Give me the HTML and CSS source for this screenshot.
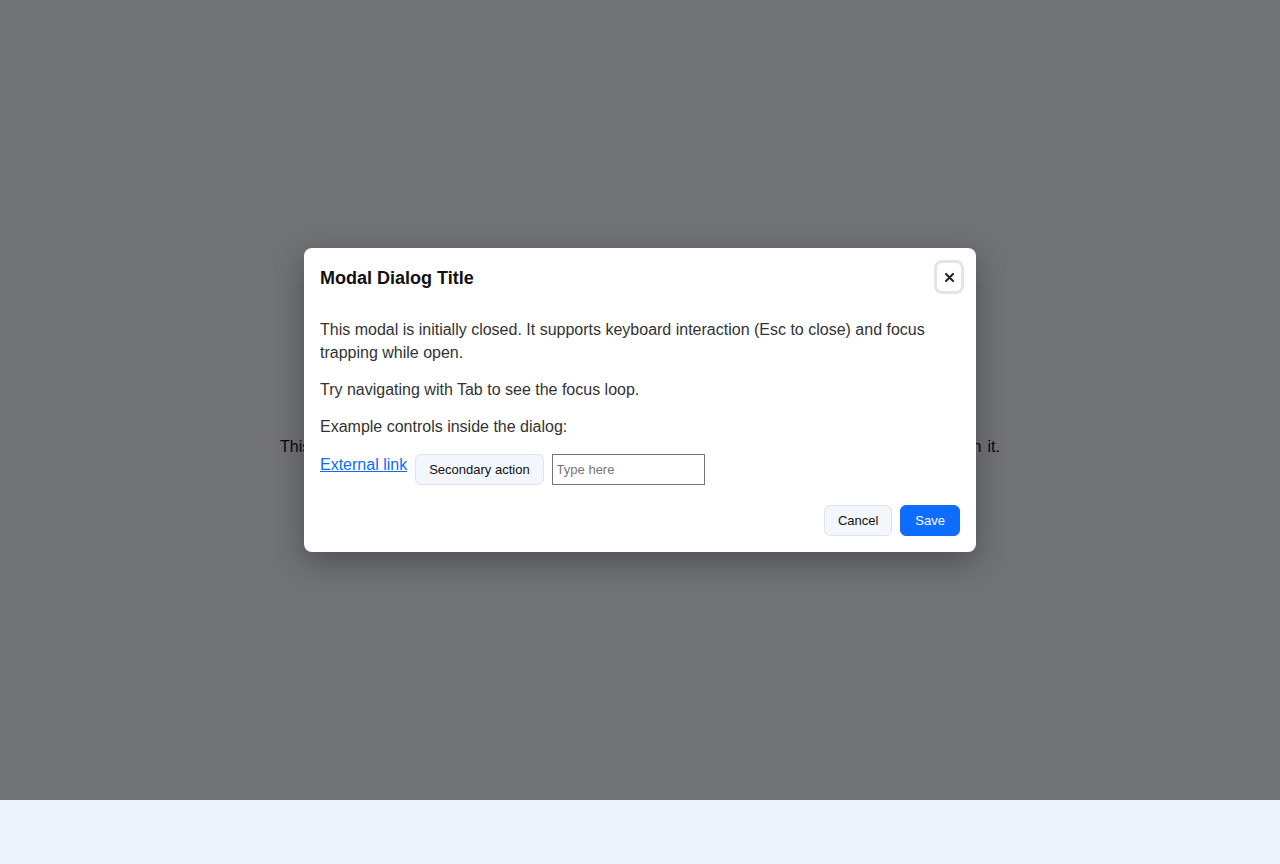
FILE: index.html
```html
<!DOCTYPE html>
<html lang="en">
<head>
<meta charset="utf-8">
<title>Modal Dialog</title>
<link rel="stylesheet" href="styles.css">
</head>
<body>
  <main class="page">
    <p class="page-text">This page features an accessible modal dialog. To interact with it, use the button above to open it.</p>
  </main>
  <div class="overlay">
    <div class="modal" role="dialog" aria-modal="true" aria-labelledby="modal-title">
      <div class="modal-header">
        <h2 class="modal-title" id="modal-title">Modal Dialog Title</h2>
        <button class="close-btn" aria-label="Close">
          <svg width="9" height="9" viewBox="0 0 9 9" aria-hidden="true"><path d="M1 1L8 8M8 1L1 8" stroke="#222" stroke-width="2" stroke-linecap="round"/></svg>
        </button>
      </div>
      <div class="modal-body">
        <p>This modal is initially closed. It supports keyboard interaction (Esc to close) and focus trapping while open.</p>
        <p>Try navigating with Tab to see the focus loop.</p>
        <p class="last">Example controls inside the dialog:</p>
        <div class="controls">
          <a href="#" class="ext-link">External link</a>
          <button class="btn btn-secondary">Secondary action</button>
          <input class="text-input" type="text" placeholder="Type here">
        </div>
      </div>
      <div class="modal-footer">
        <button class="btn btn-secondary">Cancel</button>
        <button class="btn btn-primary">Save</button>
      </div>
    </div>
  </div>
</body>
</html>
```
FILE: styles.css
```css
html, body {
  margin: 0;
  padding: 0;
}
body {
  background: #eef2fa;
  font-family: "Liberation Sans", Arial, sans-serif;
  color: #111;
  height: 864px;
}
.page {
  display: flex;
  justify-content: center;
  padding-top: 435px;
}
.page-text {
  width: 720px;
  margin: 0;
  font-size: 16px;
  line-height: 24px;
  text-align: justify;
  text-align-last: justify;
}
.overlay {
  position: absolute;
  top: 0;
  left: 0;
  width: 100%;
  height: 800px;
  background: rgba(0, 0, 0, 0.53);
  display: flex;
  align-items: center;
  justify-content: center;
}
.modal {
  width: 672px;
  box-sizing: border-box;
  background: #fff;
  border-radius: 8px;
  padding: 12px 16px 16px;
  box-shadow: 0 10px 30px rgba(0, 0, 0, 0.3);
}
.modal-header {
  display: flex;
  align-items: center;
  justify-content: space-between;
  height: 34px;
}
.modal-title {
  margin: 0;
  margin-top: 3px;
  font-size: 18px;
  font-weight: 700;
  color: #111;
}
.close-btn {
  width: 30px;
  height: 34px;
  margin-right: -4px;
  border: 3px solid #e4e4e4;
  border-radius: 8px;
  background: #fff;
  display: flex;
  align-items: center;
  justify-content: center;
  padding: 0;
}
.modal-body {
  margin-top: 24px;
  color: #333;
  font-size: 16px;
  line-height: 23px;
}
.modal-body p {
  margin: 0 0 14px;
}
.modal-body p.last {
  margin-bottom: 16px;
}
.controls {
  display: flex;
  align-items: flex-start;
  gap: 8px;
}
.ext-link {
  color: #0b6cf5;
  text-decoration: underline;
  font-size: 16px;
  line-height: 21px;
}
.btn {
  font-family: "Liberation Sans", Arial, sans-serif;
  font-size: 13px;
  line-height: 15px;
  padding: 7px 13px;
  border-radius: 6px;
  border: 1px solid #dde4ef;
  cursor: pointer;
}
.btn-secondary {
  background: #f3f6fb;
  color: #111;
}
.btn-primary {
  background: #0d6efd;
  border-color: #0d6efd;
  color: #fff;
  padding: 7px 14px;
}
.text-input {
  width: 153px;
  height: 31px;
  box-sizing: border-box;
  border: 1px solid #767676;
  padding: 1px 4px;
  font-family: "Liberation Sans", Arial, sans-serif;
  font-size: 13px;
  margin: 0;
}
.text-input::placeholder {
  color: #777;
}
.modal-footer {
  display: flex;
  justify-content: flex-end;
  gap: 8px;
  margin-top: 20px;
}
```
